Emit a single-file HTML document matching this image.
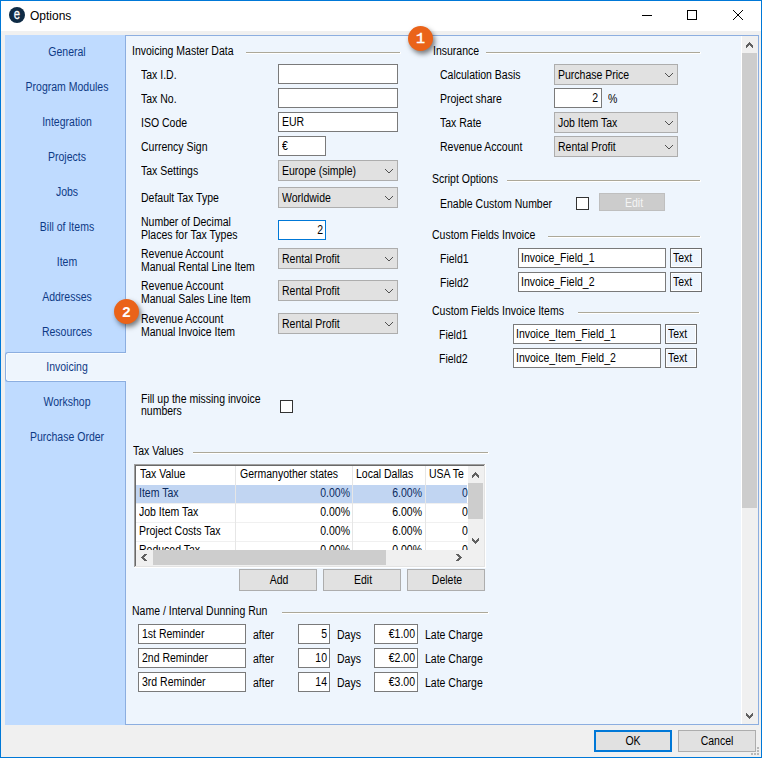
<!DOCTYPE html><html><head><meta charset="utf-8"><style>
html,body{margin:0;padding:0;width:762px;height:758px;overflow:hidden;background:#f0f0f0}
body>div,body>svg{position:absolute}
.t{position:absolute;font-family:"Liberation Sans",sans-serif;white-space:nowrap;color:#000;font-size:12px;line-height:14px;transform:scaleX(0.875)}
.badge{position:absolute;width:25px;height:25px;border-radius:50%;background:#ea6319;color:#fff;font:bold 14px/26px "Liberation Sans",sans-serif;text-align:center;box-shadow:2px 3px 5px rgba(0,0,0,0.5)}
</style></head><body>

<div style="left:0px;top:0px;width:762px;height:758px;box-sizing:border-box;border:1px solid #0078d7;background:#f0f0f0"></div>
<div style="left:1px;top:1px;width:760px;height:30px;background:#fff"></div>
<div style="left:9px;top:7px;width:16px;height:16px;border-radius:50%;background:#0e2b45"></div>
<div style="left:9px;top:6px;width:16px;height:16px;color:#fff;font:15px/16px 'Liberation Sans',sans-serif;text-align:center;transform:scaleX(0.75);-webkit-text-stroke:0.3px #fff">e</div>
<div class="t" style="left:30px;top:9px;font-size:12px;line-height:14px;letter-spacing:0;transform:none">Options</div>
<div style="left:642px;top:15px;width:10px;height:1px;background:#000"></div>
<div style="left:687px;top:10px;width:10px;height:10px;box-sizing:border-box;border:1px solid #000"></div>
<svg style="left:732px;top:9px" width="12" height="12"><path d="M1 1 L11 11 M11 1 L1 11" stroke="#000" stroke-width="1"/></svg>
<div style="left:5px;top:35px;width:120px;height:690px;background:#bfdbff"></div>
<div style="left:125px;top:35px;width:634px;height:690px;box-sizing:border-box;border:1px solid #8caee0;background:#eef5fd"></div>
<div style="left:5px;top:352px;width:121px;height:30px;box-sizing:border-box;border:1px solid #8caee0;border-right:none;border-radius:3px 0 0 3px;background:#eef5fd"></div>
<div style="left:8px;top:353px;width:118px;height:1px;background:#f8fcff"></div>
<div style="left:8px;top:380px;width:118px;height:1px;background:#f8fcff"></div>
<div style="left:6px;top:355px;width:1px;height:24px;background:#f8fcff"></div>
<div class="t" style="left:-83px;width:300px;text-align:center;top:45px;color:#0e3a86;transform-origin:50% 0;">General</div>
<div class="t" style="left:-83px;width:300px;text-align:center;top:80px;color:#0e3a86;transform-origin:50% 0;">Program Modules</div>
<div class="t" style="left:-83px;width:300px;text-align:center;top:115px;color:#0e3a86;transform-origin:50% 0;">Integration</div>
<div class="t" style="left:-83px;width:300px;text-align:center;top:150px;color:#0e3a86;transform-origin:50% 0;">Projects</div>
<div class="t" style="left:-83px;width:300px;text-align:center;top:185px;color:#0e3a86;transform-origin:50% 0;">Jobs</div>
<div class="t" style="left:-83px;width:300px;text-align:center;top:220px;color:#0e3a86;transform-origin:50% 0;">Bill of Items</div>
<div class="t" style="left:-83px;width:300px;text-align:center;top:255px;color:#0e3a86;transform-origin:50% 0;">Item</div>
<div class="t" style="left:-83px;width:300px;text-align:center;top:290px;color:#0e3a86;transform-origin:50% 0;">Addresses</div>
<div class="t" style="left:-83px;width:300px;text-align:center;top:325px;color:#0e3a86;transform-origin:50% 0;">Resources</div>
<div class="t" style="left:-83px;width:300px;text-align:center;top:360px;color:#0e3a86;transform-origin:50% 0;">Invoicing</div>
<div class="t" style="left:-83px;width:300px;text-align:center;top:395px;color:#0e3a86;transform-origin:50% 0;">Workshop</div>
<div class="t" style="left:-83px;width:300px;text-align:center;top:430px;color:#0e3a86;transform-origin:50% 0;">Purchase Order</div>
<div class="t" style="left:132px;top:44px;color:#000;transform-origin:0 0;">Invoicing Master Data</div>
<div style="left:246px;top:52px;width:154px;height:1px;background:#aca899"></div>
<div style="left:246px;top:53px;width:155px;height:1px;background:#fff"></div>
<div style="left:400px;top:52px;width:1px;height:1px;background:#fff"></div>
<div class="t" style="left:141px;top:68px;color:#000;transform-origin:0 0;">Tax I.D.</div>
<div class="t" style="left:141px;top:92px;color:#000;transform-origin:0 0;">Tax No.</div>
<div class="t" style="left:141px;top:116px;color:#000;transform-origin:0 0;">ISO Code</div>
<div class="t" style="left:141px;top:140px;color:#000;transform-origin:0 0;">Currency Sign</div>
<div class="t" style="left:141px;top:164px;color:#000;transform-origin:0 0;">Tax Settings</div>
<div class="t" style="left:141px;top:191px;color:#000;transform-origin:0 0;">Default Tax Type</div>
<div style="left:278px;top:64px;width:120px;height:20px;background:#fff;box-sizing:border-box;border:1px solid #7a7a7a"></div>
<div style="left:278px;top:88px;width:120px;height:20px;background:#fff;box-sizing:border-box;border:1px solid #7a7a7a"></div>
<div style="left:278px;top:112px;width:120px;height:20px;background:#fff;box-sizing:border-box;border:1px solid #7a7a7a"></div>
<div class="t" style="left:282px;top:115px;color:#000;transform-origin:0 0;">EUR</div>
<div style="left:278px;top:136px;width:48px;height:20px;background:#fff;box-sizing:border-box;border:1px solid #7a7a7a"></div>
<div class="t" style="left:282px;top:139px;color:#000;transform-origin:0 0;">€</div>
<div style="left:278px;top:160px;width:120px;height:21px;background:#e1e1e1;box-sizing:border-box;border:1px solid #adadad"></div>
<svg style="left:385px;top:169px" width="8" height="4" shape-rendering="crispEdges"><path d="M0 0h1v1h-1zM7 0h1v1h-1zM1 1h1v1h-1zM6 1h1v1h-1zM2 2h1v1h-1zM5 2h1v1h-1zM3 3h2v1h-2z" fill="#505050"/></svg>
<div class="t" style="left:282px;top:164px;color:#000;transform-origin:0 0;">Europe (simple)</div>
<div style="left:278px;top:187px;width:120px;height:21px;background:#e1e1e1;box-sizing:border-box;border:1px solid #adadad"></div>
<svg style="left:385px;top:196px" width="8" height="4" shape-rendering="crispEdges"><path d="M0 0h1v1h-1zM7 0h1v1h-1zM1 1h1v1h-1zM6 1h1v1h-1zM2 2h1v1h-1zM5 2h1v1h-1zM3 3h2v1h-2z" fill="#505050"/></svg>
<div class="t" style="left:282px;top:191px;color:#000;transform-origin:0 0;">Worldwide</div>
<div class="t" style="left:141px;top:215px;color:#000;transform-origin:0 0;">Number of Decimal</div>
<div class="t" style="left:141px;top:228px;color:#000;transform-origin:0 0;">Places for Tax Types</div>
<div style="left:278px;top:220px;width:48px;height:20px;background:#fff;box-sizing:border-box;border:1px solid #0078d7"></div>
<div class="t" style="left:23px;width:300px;text-align:right;top:223px;color:#000;transform-origin:100% 0;">2</div>
<div class="t" style="left:141px;top:247px;color:#000;transform-origin:0 0;">Revenue Account</div>
<div class="t" style="left:141px;top:260px;color:#000;transform-origin:0 0;">Manual Rental Line Item</div>
<div style="left:278px;top:248px;width:120px;height:21px;background:#e1e1e1;box-sizing:border-box;border:1px solid #adadad"></div>
<svg style="left:385px;top:257px" width="8" height="4" shape-rendering="crispEdges"><path d="M0 0h1v1h-1zM7 0h1v1h-1zM1 1h1v1h-1zM6 1h1v1h-1zM2 2h1v1h-1zM5 2h1v1h-1zM3 3h2v1h-2z" fill="#505050"/></svg>
<div class="t" style="left:282px;top:252px;color:#000;transform-origin:0 0;">Rental Profit</div>
<div class="t" style="left:141px;top:279px;color:#000;transform-origin:0 0;">Revenue Account</div>
<div class="t" style="left:141px;top:292px;color:#000;transform-origin:0 0;">Manual Sales Line Item</div>
<div style="left:278px;top:280px;width:120px;height:21px;background:#e1e1e1;box-sizing:border-box;border:1px solid #adadad"></div>
<svg style="left:385px;top:289px" width="8" height="4" shape-rendering="crispEdges"><path d="M0 0h1v1h-1zM7 0h1v1h-1zM1 1h1v1h-1zM6 1h1v1h-1zM2 2h1v1h-1zM5 2h1v1h-1zM3 3h2v1h-2z" fill="#505050"/></svg>
<div class="t" style="left:282px;top:284px;color:#000;transform-origin:0 0;">Rental Profit</div>
<div class="t" style="left:141px;top:312px;color:#000;transform-origin:0 0;">Revenue Account</div>
<div class="t" style="left:141px;top:325px;color:#000;transform-origin:0 0;">Manual Invoice Item</div>
<div style="left:278px;top:313px;width:120px;height:21px;background:#e1e1e1;box-sizing:border-box;border:1px solid #adadad"></div>
<svg style="left:385px;top:322px" width="8" height="4" shape-rendering="crispEdges"><path d="M0 0h1v1h-1zM7 0h1v1h-1zM1 1h1v1h-1zM6 1h1v1h-1zM2 2h1v1h-1zM5 2h1v1h-1zM3 3h2v1h-2z" fill="#505050"/></svg>
<div class="t" style="left:282px;top:317px;color:#000;transform-origin:0 0;">Rental Profit</div>
<div class="t" style="left:433px;top:44px;color:#000;transform-origin:0 0;">Insurance</div>
<div style="left:486px;top:52px;width:214px;height:1px;background:#aca899"></div>
<div style="left:486px;top:53px;width:215px;height:1px;background:#fff"></div>
<div style="left:700px;top:52px;width:1px;height:1px;background:#fff"></div>
<div class="t" style="left:440px;top:68px;color:#000;transform-origin:0 0;">Calculation Basis</div>
<div style="left:554px;top:64px;width:124px;height:21px;background:#e1e1e1;box-sizing:border-box;border:1px solid #adadad"></div>
<svg style="left:665px;top:73px" width="8" height="4" shape-rendering="crispEdges"><path d="M0 0h1v1h-1zM7 0h1v1h-1zM1 1h1v1h-1zM6 1h1v1h-1zM2 2h1v1h-1zM5 2h1v1h-1zM3 3h2v1h-2z" fill="#505050"/></svg>
<div class="t" style="left:558px;top:68px;color:#000;transform-origin:0 0;">Purchase Price</div>
<div class="t" style="left:440px;top:92px;color:#000;transform-origin:0 0;">Project share</div>
<div style="left:554px;top:88px;width:48px;height:20px;background:#fff;box-sizing:border-box;border:1px solid #7a7a7a"></div>
<div class="t" style="left:298px;width:300px;text-align:right;top:91px;color:#000;transform-origin:100% 0;">2</div>
<div class="t" style="left:608px;top:92px;color:#000;transform-origin:0 0;">%</div>
<div class="t" style="left:440px;top:116px;color:#000;transform-origin:0 0;">Tax Rate</div>
<div style="left:554px;top:112px;width:124px;height:21px;background:#e1e1e1;box-sizing:border-box;border:1px solid #adadad"></div>
<svg style="left:665px;top:121px" width="8" height="4" shape-rendering="crispEdges"><path d="M0 0h1v1h-1zM7 0h1v1h-1zM1 1h1v1h-1zM6 1h1v1h-1zM2 2h1v1h-1zM5 2h1v1h-1zM3 3h2v1h-2z" fill="#505050"/></svg>
<div class="t" style="left:558px;top:116px;color:#000;transform-origin:0 0;">Job Item Tax</div>
<div class="t" style="left:440px;top:140px;color:#000;transform-origin:0 0;">Revenue Account</div>
<div style="left:554px;top:136px;width:124px;height:21px;background:#e1e1e1;box-sizing:border-box;border:1px solid #adadad"></div>
<svg style="left:665px;top:145px" width="8" height="4" shape-rendering="crispEdges"><path d="M0 0h1v1h-1zM7 0h1v1h-1zM1 1h1v1h-1zM6 1h1v1h-1zM2 2h1v1h-1zM5 2h1v1h-1zM3 3h2v1h-2z" fill="#505050"/></svg>
<div class="t" style="left:558px;top:140px;color:#000;transform-origin:0 0;">Rental Profit</div>
<div class="t" style="left:432px;top:172px;color:#000;transform-origin:0 0;">Script Options</div>
<div style="left:507px;top:180px;width:193px;height:1px;background:#aca899"></div>
<div style="left:507px;top:181px;width:194px;height:1px;background:#fff"></div>
<div style="left:700px;top:180px;width:1px;height:1px;background:#fff"></div>
<div class="t" style="left:440px;top:197px;color:#000;transform-origin:0 0;">Enable Custom Number</div>
<div style="left:576px;top:197px;width:13px;height:13px;box-sizing:border-box;border:1px solid #333;background:#fff"></div>
<div style="left:599px;top:193px;width:66px;height:18px;box-sizing:border-box;border:1px solid #bfbfbf;background:#cccccc"></div>
<div class="t" style="left:484px;width:300px;text-align:center;top:196px;color:#f4f4f4;transform-origin:50% 0;">Edit</div>
<div class="t" style="left:432px;top:228px;color:#000;transform-origin:0 0;">Custom Fields Invoice</div>
<div style="left:548px;top:236px;width:152px;height:1px;background:#aca899"></div>
<div style="left:548px;top:237px;width:153px;height:1px;background:#fff"></div>
<div style="left:700px;top:236px;width:1px;height:1px;background:#fff"></div>
<div class="t" style="left:440px;top:252px;color:#000;transform-origin:0 0;">Field1</div>
<div style="left:518px;top:248px;width:148px;height:20px;background:#fff;box-sizing:border-box;border:1px solid #7a7a7a"></div>
<div class="t" style="left:521px;top:251px;color:#000;transform-origin:0 0;">Invoice_Field_1</div>
<div style="left:670px;top:248px;width:32px;height:20px;box-sizing:border-box;border:1px solid #6e6e6e;background:#eef5fd;box-shadow:inset 0 0 0 1px #fff"></div>
<div class="t" style="left:673px;top:251px;color:#000;transform-origin:0 0;">Text</div>
<div class="t" style="left:440px;top:276px;color:#000;transform-origin:0 0;">Field2</div>
<div style="left:518px;top:272px;width:148px;height:20px;background:#fff;box-sizing:border-box;border:1px solid #7a7a7a"></div>
<div class="t" style="left:521px;top:275px;color:#000;transform-origin:0 0;">Invoice_Field_2</div>
<div style="left:670px;top:272px;width:32px;height:20px;box-sizing:border-box;border:1px solid #6e6e6e;background:#eef5fd;box-shadow:inset 0 0 0 1px #fff"></div>
<div class="t" style="left:673px;top:275px;color:#000;transform-origin:0 0;">Text</div>
<div class="t" style="left:432px;top:304px;color:#000;transform-origin:0 0;">Custom Fields Invoice Items</div>
<div style="left:578px;top:312px;width:121px;height:1px;background:#aca899"></div>
<div style="left:578px;top:313px;width:122px;height:1px;background:#fff"></div>
<div style="left:699px;top:312px;width:1px;height:1px;background:#fff"></div>
<div class="t" style="left:439px;top:328px;color:#000;transform-origin:0 0;">Field1</div>
<div style="left:513px;top:324px;width:148px;height:20px;background:#fff;box-sizing:border-box;border:1px solid #7a7a7a"></div>
<div class="t" style="left:516px;top:327px;color:#000;transform-origin:0 0;">Invoice_Item_Field_1</div>
<div style="left:665px;top:324px;width:32px;height:20px;box-sizing:border-box;border:1px solid #6e6e6e;background:#eef5fd;box-shadow:inset 0 0 0 1px #fff"></div>
<div class="t" style="left:668px;top:327px;color:#000;transform-origin:0 0;">Text</div>
<div class="t" style="left:439px;top:352px;color:#000;transform-origin:0 0;">Field2</div>
<div style="left:513px;top:348px;width:148px;height:20px;background:#fff;box-sizing:border-box;border:1px solid #7a7a7a"></div>
<div class="t" style="left:516px;top:351px;color:#000;transform-origin:0 0;">Invoice_Item_Field_2</div>
<div style="left:665px;top:348px;width:32px;height:20px;box-sizing:border-box;border:1px solid #6e6e6e;background:#eef5fd;box-shadow:inset 0 0 0 1px #fff"></div>
<div class="t" style="left:668px;top:351px;color:#000;transform-origin:0 0;">Text</div>
<div class="t" style="left:141px;top:392px;color:#000;transform-origin:0 0;">Fill up the missing invoice</div>
<div class="t" style="left:141px;top:404px;color:#000;transform-origin:0 0;">numbers</div>
<div style="left:280px;top:400px;width:13px;height:13px;box-sizing:border-box;border:1px solid #333;background:#fff"></div>
<div class="t" style="left:133px;top:444px;color:#000;transform-origin:0 0;">Tax Values</div>
<div style="left:193px;top:452px;width:295px;height:1px;background:#aca899"></div>
<div style="left:193px;top:453px;width:296px;height:1px;background:#fff"></div>
<div style="left:488px;top:452px;width:1px;height:1px;background:#fff"></div>
<div style="left:134px;top:464px;width:352px;height:104px;background:#fff"></div>
<div style="left:134px;top:464px;width:351px;height:1px;background:#a0a0a0"></div>
<div style="left:134px;top:464px;width:1px;height:103px;background:#a0a0a0"></div>
<div style="left:135px;top:465px;width:349px;height:1px;background:#696969"></div>
<div style="left:135px;top:465px;width:1px;height:101px;background:#696969"></div>
<div style="left:484px;top:465px;width:1px;height:102px;background:#e3e3e3"></div>
<div style="left:135px;top:566px;width:350px;height:1px;background:#e3e3e3"></div>
<div style="left:136px;top:485px;width:331px;height:18px;background:#c1d5f2"></div>
<div style="left:136px;top:503px;width:332px;height:1px;background:#f0f0f0"></div>
<div style="left:136px;top:522px;width:332px;height:1px;background:#f0f0f0"></div>
<div style="left:136px;top:541px;width:332px;height:1px;background:#f0f0f0"></div>
<div style="left:235px;top:466px;width:1px;height:84px;background:#e6e6e6"></div>
<div style="left:352px;top:466px;width:1px;height:84px;background:#e6e6e6"></div>
<div style="left:425px;top:466px;width:1px;height:84px;background:#e6e6e6"></div>
<div class="t" style="left:140px;top:467px;color:#000;transform-origin:0 0;">Tax Value</div>
<div class="t" style="left:240px;top:467px;color:#000;transform-origin:0 0;">Germanyother states</div>
<div class="t" style="left:356px;top:467px;color:#000;transform-origin:0 0;">Local Dallas</div>
<div class="t" style="left:429px;top:467px;color:#000;transform-origin:0 0;">USA Te</div>
<div style="left:136px;top:466px;width:332px;height:84px;overflow:hidden">
<div class="t" style="left:3px;top:20px;color:#0b2a5e;transform-origin:0 0;">Item Tax</div>
<div class="t" style="left:-86px;width:300px;text-align:right;top:20px;color:#0b2a5e;transform-origin:100% 0;">0.00%</div>
<div class="t" style="left:-14px;width:300px;text-align:right;top:20px;color:#0b2a5e;transform-origin:100% 0;">6.00%</div>
<div class="t" style="left:326px;top:20px;color:#0b2a5e;transform-origin:0 0;">0.00%</div>
<div class="t" style="left:3px;top:39px;color:#000;transform-origin:0 0;">Job Item Tax</div>
<div class="t" style="left:-86px;width:300px;text-align:right;top:39px;color:#000;transform-origin:100% 0;">0.00%</div>
<div class="t" style="left:-14px;width:300px;text-align:right;top:39px;color:#000;transform-origin:100% 0;">6.00%</div>
<div class="t" style="left:326px;top:39px;color:#000;transform-origin:0 0;">0.00%</div>
<div class="t" style="left:3px;top:58px;color:#000;transform-origin:0 0;">Project Costs Tax</div>
<div class="t" style="left:-86px;width:300px;text-align:right;top:58px;color:#000;transform-origin:100% 0;">0.00%</div>
<div class="t" style="left:-14px;width:300px;text-align:right;top:58px;color:#000;transform-origin:100% 0;">6.00%</div>
<div class="t" style="left:326px;top:58px;color:#000;transform-origin:0 0;">0.00%</div>
<div class="t" style="left:3px;top:77px;color:#000;transform-origin:0 0;">Reduced Tax</div>
<div class="t" style="left:-86px;width:300px;text-align:right;top:77px;color:#000;transform-origin:100% 0;">0.00%</div>
<div class="t" style="left:-14px;width:300px;text-align:right;top:77px;color:#000;transform-origin:100% 0;">0.00%</div>
<div class="t" style="left:326px;top:77px;color:#000;transform-origin:0 0;">0.00%</div>
</div>
<div style="left:468px;top:466px;width:16px;height:84px;background:#f0f0f0"></div>
<div style="left:468px;top:483px;width:15px;height:36px;background:#cdcdcd"></div>
<svg style="left:472px;top:472px" width="7" height="6" shape-rendering="crispEdges"><path d="M3 0h1v1h-1zM2 1h1v1h-1zM3 1h1v1h-1zM4 1h1v1h-1zM1 2h1v1h-1zM2 2h1v1h-1zM3 2h1v1h-1zM4 2h1v1h-1zM5 2h1v1h-1zM0 3h1v1h-1zM1 3h1v1h-1zM2 3h1v1h-1zM4 3h1v1h-1zM5 3h1v1h-1zM6 3h1v1h-1zM0 4h1v1h-1zM1 4h1v1h-1zM5 4h1v1h-1zM6 4h1v1h-1zM0 5h1v1h-1zM6 5h1v1h-1z" fill="#606060"/></svg>
<svg style="left:472px;top:538px" width="7" height="6" shape-rendering="crispEdges"><path d="M3 5h1v1h-1zM2 4h1v1h-1zM3 4h1v1h-1zM4 4h1v1h-1zM1 3h1v1h-1zM2 3h1v1h-1zM3 3h1v1h-1zM4 3h1v1h-1zM5 3h1v1h-1zM0 2h1v1h-1zM1 2h1v1h-1zM2 2h1v1h-1zM4 2h1v1h-1zM5 2h1v1h-1zM6 2h1v1h-1zM0 1h1v1h-1zM1 1h1v1h-1zM5 1h1v1h-1zM6 1h1v1h-1zM0 0h1v1h-1zM6 0h1v1h-1z" fill="#606060"/></svg>
<div style="left:136px;top:550px;width:348px;height:16px;background:#f0f0f0"></div>
<div style="left:153px;top:550px;width:233px;height:15px;background:#cdcdcd"></div>
<svg style="left:141px;top:554px" width="6" height="7" shape-rendering="crispEdges"><path d="M0 3h1v1h-1zM1 2h1v1h-1zM1 3h1v1h-1zM1 4h1v1h-1zM2 1h1v1h-1zM2 2h1v1h-1zM2 3h1v1h-1zM2 4h1v1h-1zM2 5h1v1h-1zM3 0h1v1h-1zM3 1h1v1h-1zM3 2h1v1h-1zM3 4h1v1h-1zM3 5h1v1h-1zM3 6h1v1h-1zM4 0h1v1h-1zM4 1h1v1h-1zM4 5h1v1h-1zM4 6h1v1h-1zM5 0h1v1h-1zM5 6h1v1h-1z" fill="#606060"/></svg>
<svg style="left:456px;top:554px" width="6" height="7" shape-rendering="crispEdges"><path d="M5 3h1v1h-1zM4 2h1v1h-1zM4 3h1v1h-1zM4 4h1v1h-1zM3 1h1v1h-1zM3 2h1v1h-1zM3 3h1v1h-1zM3 4h1v1h-1zM3 5h1v1h-1zM2 0h1v1h-1zM2 1h1v1h-1zM2 2h1v1h-1zM2 4h1v1h-1zM2 5h1v1h-1zM2 6h1v1h-1zM1 0h1v1h-1zM1 1h1v1h-1zM1 5h1v1h-1zM1 6h1v1h-1zM0 0h1v1h-1zM0 6h1v1h-1z" fill="#606060"/></svg>
<div style="left:239px;top:569px;width:78px;height:22px;box-sizing:border-box;border:1px solid #adadad;background:#e1e1e1"></div>
<div class="t" style="left:129px;width:300px;text-align:center;top:573px;color:#000;transform-origin:50% 0;">Add</div>
<div style="left:323px;top:569px;width:78px;height:22px;box-sizing:border-box;border:1px solid #adadad;background:#e1e1e1"></div>
<div class="t" style="left:213px;width:300px;text-align:center;top:573px;color:#000;transform-origin:50% 0;">Edit</div>
<div style="left:407px;top:569px;width:78px;height:22px;box-sizing:border-box;border:1px solid #adadad;background:#e1e1e1"></div>
<div class="t" style="left:297px;width:300px;text-align:center;top:573px;color:#000;transform-origin:50% 0;">Delete</div>
<div class="t" style="left:132px;top:604px;color:#000;transform-origin:0 0;">Name / Interval Dunning Run</div>
<div style="left:282px;top:612px;width:206px;height:1px;background:#aca899"></div>
<div style="left:282px;top:613px;width:207px;height:1px;background:#fff"></div>
<div style="left:488px;top:612px;width:1px;height:1px;background:#fff"></div>
<div style="left:138px;top:624px;width:108px;height:20px;background:#fff;box-sizing:border-box;border:1px solid #7a7a7a"></div>
<div class="t" style="left:142px;top:627px;color:#000;transform-origin:0 0;">1st Reminder</div>
<div class="t" style="left:253px;top:628px;color:#000;transform-origin:0 0;">after</div>
<div style="left:298px;top:624px;width:32px;height:20px;background:#fff;box-sizing:border-box;border:1px solid #7a7a7a"></div>
<div class="t" style="left:27px;width:300px;text-align:right;top:627px;color:#000;transform-origin:100% 0;">5</div>
<div class="t" style="left:337px;top:628px;color:#000;transform-origin:0 0;">Days</div>
<div style="left:374px;top:624px;width:44px;height:20px;background:#fff;box-sizing:border-box;border:1px solid #7a7a7a"></div>
<div class="t" style="left:115px;width:300px;text-align:right;top:627px;color:#000;transform-origin:100% 0;">€1.00</div>
<div class="t" style="left:425px;top:628px;color:#000;transform-origin:0 0;">Late Charge</div>
<div style="left:138px;top:648px;width:108px;height:20px;background:#fff;box-sizing:border-box;border:1px solid #7a7a7a"></div>
<div class="t" style="left:142px;top:651px;color:#000;transform-origin:0 0;">2nd Reminder</div>
<div class="t" style="left:253px;top:652px;color:#000;transform-origin:0 0;">after</div>
<div style="left:298px;top:648px;width:32px;height:20px;background:#fff;box-sizing:border-box;border:1px solid #7a7a7a"></div>
<div class="t" style="left:27px;width:300px;text-align:right;top:651px;color:#000;transform-origin:100% 0;">10</div>
<div class="t" style="left:337px;top:652px;color:#000;transform-origin:0 0;">Days</div>
<div style="left:374px;top:648px;width:44px;height:20px;background:#fff;box-sizing:border-box;border:1px solid #7a7a7a"></div>
<div class="t" style="left:115px;width:300px;text-align:right;top:651px;color:#000;transform-origin:100% 0;">€2.00</div>
<div class="t" style="left:425px;top:652px;color:#000;transform-origin:0 0;">Late Charge</div>
<div style="left:138px;top:672px;width:108px;height:20px;background:#fff;box-sizing:border-box;border:1px solid #7a7a7a"></div>
<div class="t" style="left:142px;top:675px;color:#000;transform-origin:0 0;">3rd Reminder</div>
<div class="t" style="left:253px;top:676px;color:#000;transform-origin:0 0;">after</div>
<div style="left:298px;top:672px;width:32px;height:20px;background:#fff;box-sizing:border-box;border:1px solid #7a7a7a"></div>
<div class="t" style="left:27px;width:300px;text-align:right;top:675px;color:#000;transform-origin:100% 0;">14</div>
<div class="t" style="left:337px;top:676px;color:#000;transform-origin:0 0;">Days</div>
<div style="left:374px;top:672px;width:44px;height:20px;background:#fff;box-sizing:border-box;border:1px solid #7a7a7a"></div>
<div class="t" style="left:115px;width:300px;text-align:right;top:675px;color:#000;transform-origin:100% 0;">€3.00</div>
<div class="t" style="left:425px;top:676px;color:#000;transform-origin:0 0;">Late Charge</div>
<div style="left:741px;top:36px;width:1px;height:688px;background:#fff"></div>
<div style="left:742px;top:36px;width:16px;height:688px;background:#f0f0f0"></div>
<div style="left:742px;top:53px;width:15px;height:455px;background:#cdcdcd"></div>
<svg style="left:746px;top:42px" width="7" height="6" shape-rendering="crispEdges"><path d="M3 0h1v1h-1zM2 1h1v1h-1zM3 1h1v1h-1zM4 1h1v1h-1zM1 2h1v1h-1zM2 2h1v1h-1zM3 2h1v1h-1zM4 2h1v1h-1zM5 2h1v1h-1zM0 3h1v1h-1zM1 3h1v1h-1zM2 3h1v1h-1zM4 3h1v1h-1zM5 3h1v1h-1zM6 3h1v1h-1zM0 4h1v1h-1zM1 4h1v1h-1zM5 4h1v1h-1zM6 4h1v1h-1zM0 5h1v1h-1zM6 5h1v1h-1z" fill="#606060"/></svg>
<svg style="left:746px;top:713px" width="7" height="6" shape-rendering="crispEdges"><path d="M3 5h1v1h-1zM2 4h1v1h-1zM3 4h1v1h-1zM4 4h1v1h-1zM1 3h1v1h-1zM2 3h1v1h-1zM3 3h1v1h-1zM4 3h1v1h-1zM5 3h1v1h-1zM0 2h1v1h-1zM1 2h1v1h-1zM2 2h1v1h-1zM4 2h1v1h-1zM5 2h1v1h-1zM6 2h1v1h-1zM0 1h1v1h-1zM1 1h1v1h-1zM5 1h1v1h-1zM6 1h1v1h-1zM0 0h1v1h-1zM6 0h1v1h-1z" fill="#606060"/></svg>
<div class="badge" style="left:408.0px;top:26.0px;font:15px/27px 'Liberation Mono',monospace;-webkit-text-stroke:0.5px #fff">1</div>
<div class="badge" style="left:114.0px;top:299.0px;font:bold 15px/26px 'Liberation Sans',sans-serif">2</div>
<div style="left:594px;top:730px;width:78px;height:22px;box-sizing:border-box;border:2px solid #0078d7;background:#e1e1e1"></div>
<div class="t" style="left:483px;width:300px;text-align:center;top:734px;color:#000;transform-origin:50% 0;">OK</div>
<div style="left:678px;top:730px;width:78px;height:22px;box-sizing:border-box;border:1px solid #adadad;background:#e1e1e1"></div>
<div class="t" style="left:567px;width:300px;text-align:center;top:734px;color:#000;transform-origin:50% 0;">Cancel</div>
<div style="left:757px;top:747px;width:2px;height:2px;background:#b8b8b8"></div>
<div style="left:757px;top:750px;width:2px;height:2px;background:#b8b8b8"></div>
<div style="left:757px;top:753px;width:2px;height:2px;background:#b8b8b8"></div>
<div style="left:754px;top:753px;width:2px;height:2px;background:#b8b8b8"></div>
<div style="left:751px;top:753px;width:2px;height:2px;background:#b8b8b8"></div>
</body></html>
